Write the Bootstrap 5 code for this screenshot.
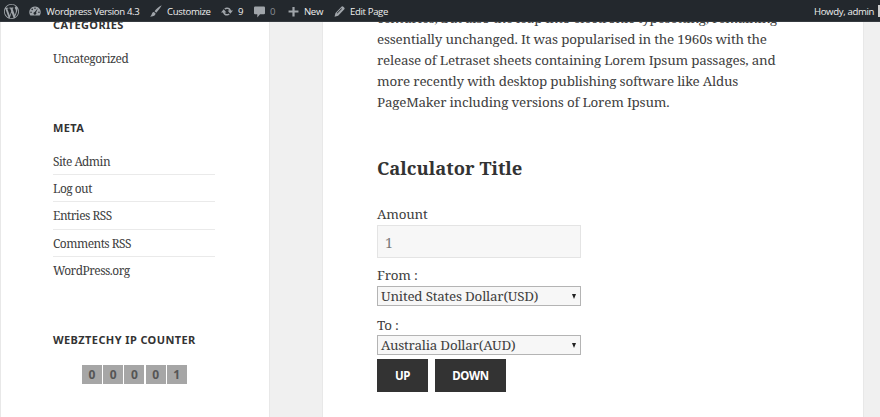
<!DOCTYPE html>
<html lang="en">
<head>
<meta charset="utf-8">
<meta name="viewport" content="width=device-width, initial-scale=1">
<title>Calculator Title</title>
<link href="https://cdn.jsdelivr.net/npm/bootstrap@5.3.0/dist/css/bootstrap.min.css" rel="stylesheet">
<style>
html,body{height:417px;overflow:hidden}
body{background:#f0f0f0;color:#404040;font-family:"Noto Serif","DejaVu Serif Condensed","DejaVu Serif",serif;font-size:13.4px;letter-spacing:-.21px;line-height:21px}
.adminbar{height:22px;background:#23282d;border-bottom:1px solid #353a3f;color:#eee;font:9.6px/21px "Open Sans","Noto Sans",sans-serif;letter-spacing:-.36px;white-space:nowrap}
.adminbar svg{fill:#a0a5aa;display:block;flex:none}
.adminbar .ab{height:22px;display:flex;align-items:center;flex:none}
.w-logo{width:29px;padding-left:4px}.w-site{width:121px}.w-cust{width:71px}.w-upd{width:33px}.w-com{width:34px;color:#8a8f94}.w-new{width:46px}
.ab svg+span{margin-left:5px}
.avatar{width:2px;height:12px;background:#ccc;margin-left:4px}
.side{width:270px;height:417px;background:#fff;border:1px solid #e8e8e8;border-width:0 1px;padding:15px 54px 0 52px;white-space:nowrap}
.side h2{font:bold 11px/20px "Noto Sans",sans-serif;letter-spacing:.4px;color:#333;margin:0}
.side ul{font-size:11.9px;line-height:25.3px;letter-spacing:-.5px;margin:9.5px 0 0}
.side li{padding-top:1px}
.side li+li{border-top:1px solid #eaeaea}
.side .meta-title{margin-top:47.5px}
.side .counter-title{margin-top:47px}
.side abbr{text-decoration:none;cursor:default}
.digit{width:20px;height:19px;background:#a6a6a6;color:#555;font:bold 12px/20px "Noto Sans",sans-serif;letter-spacing:0;text-align:center}
.digits{gap:1.2px;margin:15px 0 0 29px}
.entry{width:542px;height:417px;margin-left:52px;background:#fff;border:1px solid #e8e8e8;border-width:0 1px;padding:8px 0 0 54px;white-space:nowrap}
.entry h3{font-size:18.4px;font-weight:bold;letter-spacing:0;line-height:24px;color:#333;margin:43px 0 24px}
.entry label{display:block;line-height:20px}
.calc{width:204px}
.amt{display:block;width:204px;height:33px;border:1px solid #e4e4e4;background:#f7f7f7;color:#777;padding:1px 7px 0;border-radius:0;font-size:14px;margin-top:1px}
.pick{width:204px;height:20px;border:1px solid #b4b4b4;background:#f7f7f7;padding-left:3px;line-height:19px}
.pick i{width:0;height:0;border:2.5px solid transparent;border-top:5px solid #222;border-bottom:0;margin-right:4px}
.entry .from-label{margin:7px 0 1px}
.entry .to-label{margin-top:9px}
.go{height:33px;background:#333;color:#fff;border:0;border-radius:0;padding:0;font:bold 11.5px/33px "Noto Sans",sans-serif;letter-spacing:-.35px;width:51px}
.go.wide{width:71px}
.btns{gap:7px;margin-top:4px}
</style>
</head>
<body>
<nav class="adminbar fixed-top d-flex">
<div class="ab w-logo"><svg width="15" height="15" viewBox="0 0 20 20"><path d="M20 10c0-5.51-4.49-10-10-10C4.48 0 0 4.49 0 10c0 5.52 4.48 10 10 10 5.51 0 10-4.48 10-10zM7.78 15.37L4.37 6.22c.55-.02 1.17-.08 1.17-.08.5-.06.44-1.13-.06-1.11 0 0-1.45.11-2.37.11-.18 0-.37 0-.58-.01C4.12 2.69 6.87 1.11 10 1.11c2.33 0 4.45.87 6.05 2.34-.68-.11-1.65.39-1.65 1.58 0 .74.45 1.36.9 2.1.35.61.55 1.36.55 2.46 0 1.49-1.4 5-1.4 5l-3.03-8.37c.54-.02.82-.17.82-.17.5-.05.44-1.25-.06-1.22 0 0-1.44.12-2.38.12-.87 0-2.33-.12-2.33-.12-.5-.03-.56 1.2-.06 1.22l.92.08 1.26 3.41zM17.41 10c.24-.64.74-1.87.43-4.25.7 1.29 1.05 2.71 1.05 4.25 0 3.29-1.73 6.24-4.4 7.78.97-2.59 1.94-5.2 2.92-7.78zM6.1 18.09C3.12 16.65 1.11 13.53 1.11 10c0-1.3.23-2.48.72-3.59C3.25 10.3 4.67 14.2 6.1 18.09zm4.03-6.63l2.58 6.98c-.86.29-1.76.45-2.71.45-.79 0-1.57-.11-2.29-.33.81-2.38 1.62-4.74 2.42-7.1z"/></svg></div>
<div class="ab w-site"><svg width="12" height="12" viewBox="0 0 20 20"><path fill-rule="evenodd" d="M10 2.500A9.500 9.500 0 0 0 2.300 17.500H17.700A9.500 9.500 0 0 0 10 2.500zM10 4a1.300 1.300 0 1 1 0 2.600A1.300 1.300 0 0 1 10 4zM5.300 6a1.300 1.300 0 1 1 0 2.600A1.300 1.300 0 0 1 5.300 6zM3.400 10.700a1.300 1.300 0 1 1 0 2.600A1.300 1.300 0 0 1 3.400 10.700zM16.600 10.700a1.300 1.300 0 1 1 0 2.600A1.300 1.300 0 0 1 16.600 10.700zM14.800 5.500L11.700 12.500a2.300 2.300 0 1 1-2.200-.900z"/></svg><span>Wordpress Version 4.3</span></div>
<div class="ab w-cust"><svg width="12" height="12" viewBox="0 0 20 20"><path d="M19.500.500C16 2 10 7 7.600 10.400L10.400 13C13.500 10 18 4 19.500.500zM6.600 11.500C3.800 11.300 3.400 14 2.700 16 2.200 17.500 1 18.500 0 19c4 .800 8.500-.300 9.300-4.800z"/></svg><span>Customize</span></div>
<div class="ab w-upd"><svg width="12" height="13" viewBox="0 0 20 20"><path d="M10.200 3.300a6.800 6.800 0 0 1 6.500 5.200H20l-4.500 5.200L11 8.500h3A4.300 4.300 0 0 0 7.200 6.800L5.500 4.900a6.800 6.800 0 0 1 4.700-1.600zM9.800 16.700a6.800 6.800 0 0 1-6.500-5.200H0l4.500-5.200L9 11.500H6a4.300 4.300 0 0 0 6.800 1.700l1.700 1.900a6.800 6.800 0 0 1-4.700 1.600z"/></svg><span>9</span></div>
<div class="ab w-com"><svg width="11" height="13" viewBox="0 0 20 22"><path d="M2 2h16q2 0 2 2v10q0 2-2 2h-7l-5 6v-6H2q-2 0-2-2V4q0-2 2-2z"/></svg><span>0</span></div>
<div class="ab w-new"><svg width="11" height="11" viewBox="0 0 20 20"><path d="M12 2v6h7v4h-7v7H8v-7H1V8h7V2z"/></svg><span>New</span></div>
<div class="ab"><svg width="11" height="11" viewBox="0 0 20 20"><path fill-rule="evenodd" d="M14 1q1.500-1 3 .500L18.800 3.300q1.200 1.200 0 2.700L7.500 17.500 1 19.500 2.700 12.500zM13.500 4L5 12.500l1 1L14.500 5z"/></svg><span>Edit Page</span></div>
<div class="ab ms-auto"><span>Howdy, admin</span><span class="avatar"></span></div>
</nav>
<div class="d-flex">
<aside class="side flex-shrink-0">
<h2>CATEGORIES</h2>
<ul class="list-unstyled"><li>Uncategorized</li></ul>
<h2 class="meta-title">META</h2>
<ul class="list-unstyled"><li>Site Admin</li><li>Log out</li><li>Entries <abbr>RSS</abbr></li><li>Comments <abbr>RSS</abbr></li><li>WordPress.org</li></ul>
<h2 class="counter-title">WEBZTECHY IP COUNTER</h2>
<div class="digits d-flex"><span class="digit">0</span><span class="digit">0</span><span class="digit">0</span><span class="digit">0</span><span class="digit">1</span></div>
</aside>
<main class="entry flex-shrink-0">
<p class="mb-0">centuries, but also the leap into electronic typesetting, remaining<br>essentially unchanged. It was popularised in the 1960s with the<br>release of Letraset sheets containing Lorem Ipsum passages, and<br>more recently with desktop publishing software like Aldus<br>PageMaker including versions of Lorem Ipsum.</p>
<h3>Calculator Title</h3>
<form class="calc">
<label>Amount</label>
<input class="amt" value="1" aria-label="Amount">
<label class="from-label">From :</label>
<div class="pick d-flex align-items-center justify-content-between">United States Dollar(USD)<i></i></div>
<label class="to-label">To :</label>
<div class="pick d-flex align-items-center justify-content-between">Australia Dollar(AUD)<i></i></div>
<div class="btns d-flex"><button type="button" class="btn go">UP</button><button type="button" class="btn go wide">DOWN</button></div>
</form>
</main>
</div>
<script src="https://cdn.jsdelivr.net/npm/bootstrap@5.3.0/dist/js/bootstrap.bundle.min.js"></script>
</body>
</html>
